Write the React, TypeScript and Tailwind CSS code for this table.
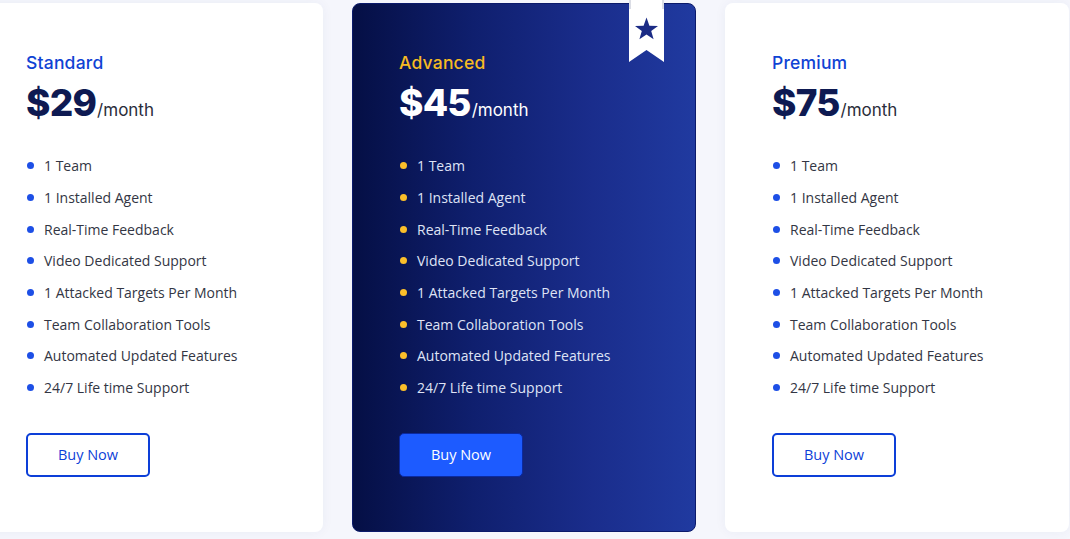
import React from "react";

const features = [
  "1 Team",
  "1 Installed Agent",
  "Real-Time Feedback",
  "Video Dedicated Support",
  "1 Attacked Targets Per Month",
  "Team Collaboration Tools",
  "Automated Updated Features",
  "24/7 Life time Support",
];

function Ribbon() {
  return (
    <svg className="absolute top-[-4px] right-[31px]" width="35" height="63" viewBox="0 0 35 63">
      <path d="M0 0 H35 V62 L17.5 50 L0 62 Z" fill="#ffffff" />
      <line x1="1" y1="0" x2="1" y2="9" stroke="#b8bccc" strokeWidth="1" />
      <line x1="34" y1="0" x2="34" y2="9" stroke="#b8bccc" strokeWidth="1" />
      <path
        d="M17.5 17.5 L20.4 25.7 L29 25.9 L22.2 31.1 L24.6 39.3 L17.5 34.5 L10.4 39.3 L12.8 31.1 L6 25.9 L14.6 25.7 Z"
        fill="#1b2b85"
      />
    </svg>
  );
}

function Card({
  name,
  price,
  featured,
}: {
  name: string;
  price: string;
  featured?: boolean;
}) {
  return (
    <div
      className={
        featured
          ? "relative w-[344px] h-[529px] shrink-0 rounded-[8px] border border-[#0b1a6b] bg-[linear-gradient(90deg,#050f45_0%,#0f1f6e_35%,#1a2d8c_70%,#203aa0_100%)] pt-[47px] pl-[46px]"
          : "relative w-[344px] h-[529px] shrink-0 rounded-[8px] bg-white shadow-[0_0_12px_rgba(40,50,120,0.05)] pt-[48px] pl-[47px]"
      }
    >
      {featured && <Ribbon />}
      <div
        className={
          "h-[24px] text-[17.5px] leading-[24px] font-medium tracking-[0.2px] " +
          (featured ? "text-[#f7bb22]" : "text-[#0f43d4]")
        }
        style={{ fontFamily: "Inter, 'Noto Sans', sans-serif" }}
      >
        {name}
      </div>
      <div className="mt-[6px] flex items-baseline h-[44px]" style={{ fontFamily: "Inter, 'Noto Sans', sans-serif" }}>
        <span
          className={
            "text-[37px] leading-[44px] font-extrabold tracking-[-0.8px] " +
            (featured ? "text-white" : "text-[#0e1a52]")
          }
        >
          {price}
        </span>
        <span
          className={
            "text-[17px] font-normal ml-[1px] " + (featured ? "text-white" : "text-[#2a2d3a]")
          }
        >
          /month
        </span>
      </div>
      <ul className="mt-[25px]" style={{ fontFamily: "'Open Sans', sans-serif" }}>
        {features.map((f) => (
          <li key={f} className="flex items-center h-[31.7px]">
            <span
              className={
                "w-[7px] h-[7px] rounded-full ml-[1px] mr-[10px] " +
                (featured ? "bg-[#fbbf2a]" : "bg-[#1d4fe6]")
              }
            />
            <span
              className={
                "text-[14px] " + (featured ? "text-[#dfe3f5]" : "text-[#333644]")
              }
            >
              {f}
            </span>
          </li>
        ))}
      </ul>
      <button
        className={
          "mt-[29px] w-[124px] h-[44px] rounded-[5px] text-[14.5px] font-medium " +
          (featured
            ? "bg-[#1d5bff] border border-[#0b2aa0] text-white"
            : "bg-white border-2 border-[#0d3fd8] text-[#0d3fd8]")
        }
        style={{ fontFamily: "'Open Sans', sans-serif" }}
      >
        Buy Now
      </button>
    </div>
  );
}

export default function App() {
  return (
    <div className="w-[1070px] h-[539px] overflow-hidden bg-[#f5f6fc]">
      <div className="flex gap-[29px] ml-[-21px] pt-[3px]">
        <Card name="Standard" price="$29" />
        <Card name="Advanced" price="$45" featured />
        <Card name="Premium" price="$75" />
      </div>
    </div>
  );
}
